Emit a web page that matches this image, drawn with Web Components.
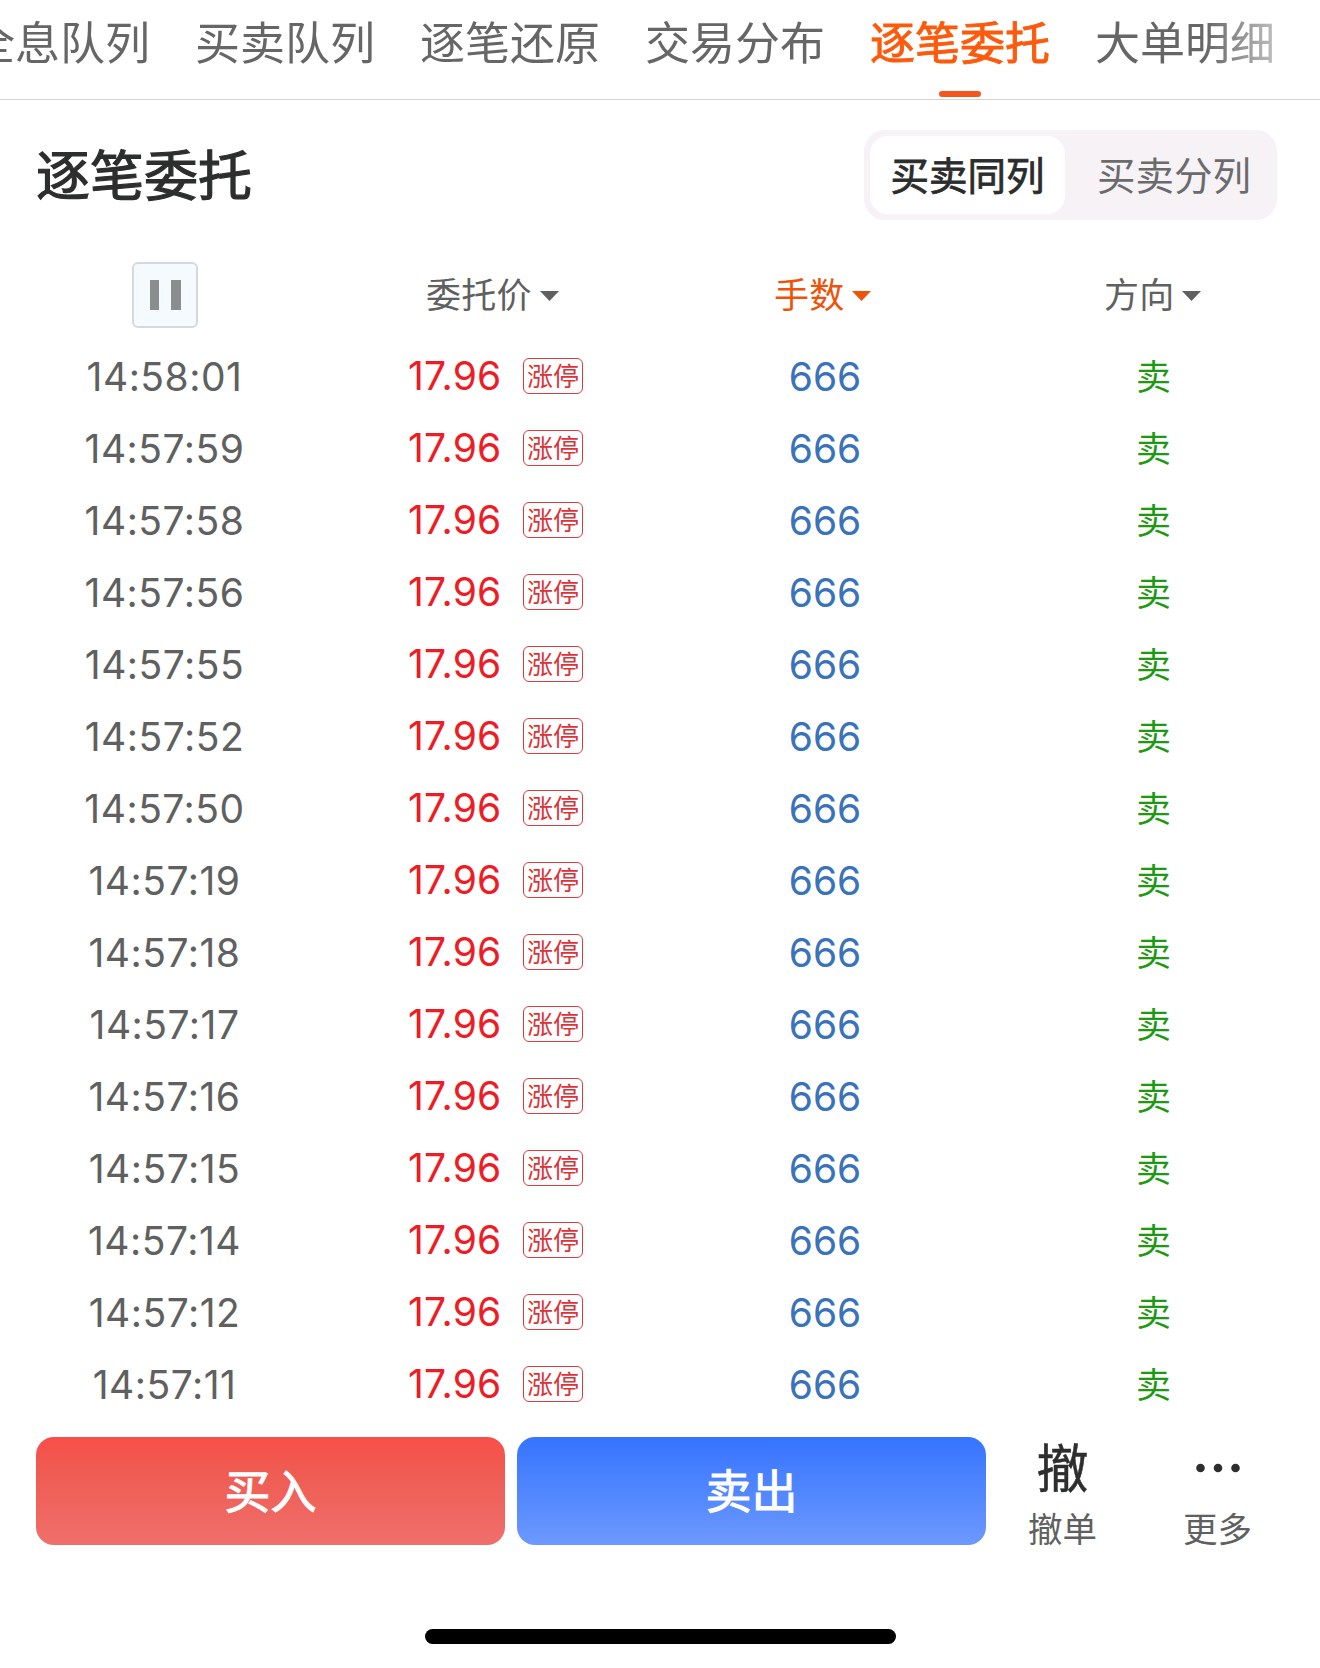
<!DOCTYPE html>
<html lang="zh-CN">
<head>
<meta charset="utf-8">
<title>逐笔委托</title>
<style>
  body {
    margin: 0;
    background: #fff;
    color: #5f6060;
    font-family: Inter, "Noto Sans CJK SC", sans-serif;
  }
</style>
</head>
<body>
<order-page></order-page>

<script>
const define = (name, html, setup) => {
  const template = document.createElement('template')
  template.innerHTML = html
  customElements.define(name, class extends HTMLElement {
    constructor() {
      super()
      this.attachShadow({ mode: 'open' })
      this.shadowRoot.appendChild(template.content.cloneNode(true))
    }
    connectedCallback() {
      if (setup) setup(this.shadowRoot, this)
    }
  })
}

define('tab-item', /* html */ `
<style>
  :host {
    display: flex;
    flex-direction: column;
    align-items: center;
    flex: none;
    height: 97px;
    box-sizing: border-box;
    font-size: 45px;
    line-height: 88px;
    white-space: nowrap;
    color: #666;
  }
  i {
    display: none;
    width: 42px;
    height: 6px;
    margin-top: 3px;
    border-radius: 3px;
    background: #f2571d;
  }
  :host([active]) {
    color: #fc5a0c;
    -webkit-text-stroke: 0.9px currentColor;
  }
  :host([active]) i {
    display: block;
  }
</style>
<slot></slot>
<i></i>
`)

define('tab-bar', /* html */ `
<style>
  :host {
    display: block;
    height: 100px;
    box-sizing: border-box;
    border-bottom: 1px solid #d3d6d5;
    overflow: hidden;
  }
  /* the last tab fades out towards the right edge */
  div {
    display: flex;
    gap: 45px;
    -webkit-mask-image: linear-gradient(90deg, #000 1205px, rgba(0, 0, 0, 0.3) 1290px);
  }
  ::slotted(tab-item:first-child) {
    margin-left: -30px;
  }
</style>
<div><slot></slot></div>
`)

define('segment-control', /* html */ `
<style>
  :host {
    display: flex;
    width: 413px;
    height: 90px;
    padding: 6px;
    box-sizing: border-box;
    border-radius: 21px;
    background: #f6f2f6;
    font-size: 38.5px;
    line-height: 80px;
    color: #6b6b6d;
  }
  div {
    width: 195px;
    text-align: center;
  }
  .on {
    border-radius: 18px;
    background: #fff;
    color: #2b2c2c;
    -webkit-text-stroke: 0.8px currentColor;
  }
  .off {
    flex: 1;
    padding-left: 12px;
  }
  .on, .off {
    height: 78px;
  }
</style>
<div class="on"><slot name="on"></slot></div>
<div class="off"><slot name="off"></slot></div>
`)

define('pause-button', /* html */ `
<style>
  :host {
    display: flex;
    align-items: center;
    justify-content: center;
    gap: 12px;
    width: 66px;
    height: 66px;
    box-sizing: border-box;
    border: 2px solid #d6d8e0;
    border-radius: 6px;
    background: #f5faff;
  }
  i {
    width: 9.5px;
    height: 30px;
    background: #8b8e8f;
  }
</style>
<i></i><i></i>
`)

define('sort-label', /* html */ `
<style>
  :host {
    display: flex;
    align-items: center;
    gap: 8px;
    height: 66px;
    font-size: 35px;
    line-height: 66px;
    letter-spacing: 0.2px;
  }
  :host([active]) {
    color: #ee5309;
  }
  svg {
    margin-top: 2px;
  }
</style>
<slot></slot>
<svg width="19" height="10" viewBox="0 0 19 10"><path d="M0 0h19L9.5 10z" fill="currentColor"/></svg>
`)

define('limit-badge', /* html */ `
<style>
  :host {
    display: block;
    width: 60px;
    height: 36px;
    box-sizing: border-box;
    border: 1.5px solid #dc3a40;
    border-radius: 6px;
    font-size: 26px;
    line-height: 36px;
    text-align: center;
    color: #dc3338;
  }
</style>
<slot></slot>
`)

define('order-row', /* html */ `
<style>
  :host {
    display: grid;
    grid-template-columns: 329px 334px 324px 333px;
    align-items: center;
    height: 72px;
    font-size: 39px;
    line-height: 74px;
  }
  .time, .lots {
    height: 72px;
    text-align: center;
  }
  .time {
    letter-spacing: 0.5px;
  }
  .price {
    display: flex;
    align-items: center;
    gap: 22px;
    height: 72px;
    padding-left: 79px;
    color: #ee1c25;
  }
  .price span {
    width: 93px;
    letter-spacing: 0.2px;
  }
  .lots {
    color: #3a73b9;
  }
  .side {
    height: 72px;
    text-align: center;
    font-size: 35px;
    color: #1e9a12;
  }
</style>
<div class="time"></div>
<div class="price"><span></span><limit-badge>涨停</limit-badge></div>
<div class="lots"></div>
<div class="side"></div>
`, (root, el) => {
  root.querySelector('.time').textContent = el.getAttribute('time')
  root.querySelector('.price span').textContent = el.getAttribute('price')
  root.querySelector('.lots').textContent = el.getAttribute('lots')
  root.querySelector('.side').textContent = el.getAttribute('side')
})

define('order-table', /* html */ `
<style>
  :host {
    display: block;
  }
  header {
    display: grid;
    grid-template-columns: 329px 334px 324px 333px;
    height: 78px;
  }
  header > * {
    justify-self: start;
  }
</style>
<header>
  <pause-button style="margin-left: 132px"></pause-button>
  <sort-label style="margin-left: 97px">委托价</sort-label>
  <sort-label active style="margin-left: 111px">手数</sort-label>
  <sort-label style="margin-left: 117px">方向</sort-label>
</header>
<div class="rows"></div>
`, (root) => {
  const times = [
    '14:58:01', '14:57:59', '14:57:58', '14:57:56', '14:57:55',
    '14:57:52', '14:57:50', '14:57:19', '14:57:18', '14:57:17',
    '14:57:16', '14:57:15', '14:57:14', '14:57:12', '14:57:11',
  ]
  root.querySelector('.rows').innerHTML = times.map((time) =>
    `<order-row time="${time}" price="17.96" lots="666" side="卖"></order-row>`
  ).join('')
})

define('trade-button', /* html */ `
<style>
  :host {
    display: block;
    width: 469px;
    height: 108px;
    border-radius: 18px;
    background: linear-gradient(#f94e49, #ef5b52 30%, #f06f6b);
    font-size: 46px;
    line-height: 109px;
    text-align: center;
    color: #fff;
    -webkit-text-stroke: 1px currentColor;
  }
  :host([sell]) {
    background: linear-gradient(#3574ff, #6d98ff);
  }
</style>
<slot></slot>
`)

define('tool-button', /* html */ `
<style>
  :host {
    display: flex;
    flex-direction: column;
    align-items: center;
    width: 155px;
    font-size: 34.5px;
    line-height: 50px;
  }
  .icon {
    display: flex;
    align-items: center;
    height: 62px;
    margin-bottom: 6px;
    font-size: 52px;
    line-height: 66px;
    color: #2d2e2e;
    -webkit-text-stroke: 0.5px currentColor;
  }
</style>
<div class="icon"><slot name="icon"></slot></div>
<slot></slot>
`)

define('bottom-bar', /* html */ `
<style>
  :host {
    display: flex;
    padding: 17px 0 0 36px;
  }
  trade-button + trade-button {
    margin: 0 -1px 0 12px;
  }
  tool-button span {
    padding-top: 4px;
  }
</style>
<trade-button>买入</trade-button>
<trade-button sell>卖出</trade-button>
<tool-button><span slot="icon">撤</span>撤单</tool-button>
<tool-button>
  <svg slot="icon" width="46" height="10" viewBox="0 0 46 10" fill="currentColor">
    <circle cx="5.5" cy="5" r="4.3"/><circle cx="23" cy="5" r="4.3"/><circle cx="40.5" cy="5" r="4.3"/>
  </svg>更多
</tool-button>
`)

define('order-page', /* html */ `
<style>
  :host {
    display: flex;
    flex-direction: column;
    width: 1320px;
    height: 1668px;
    overflow: hidden;
  }
  .head {
    display: flex;
    justify-content: space-between;
    padding: 30px 43px 42px 36px;
  }
  h1 {
    height: 90px;
    margin: 0;
    font-size: 54px;
    font-weight: 400;
    line-height: 94px;
    color: #2d2e2e;
    -webkit-text-stroke: 1.2px currentColor;
  }
  .home {
    width: 471px;
    height: 15px;
    margin: auto auto 24px;
    border-radius: 8px;
    background: #000;
  }
</style>
<tab-bar>
  <tab-item>全息队列</tab-item>
  <tab-item>买卖队列</tab-item>
  <tab-item>逐笔还原</tab-item>
  <tab-item>交易分布</tab-item>
  <tab-item active>逐笔委托</tab-item>
  <tab-item>大单明细</tab-item>
</tab-bar>
<div class="head">
  <h1>逐笔委托</h1>
  <segment-control><span slot="on">买卖同列</span><span slot="off">买卖分列</span></segment-control>
</div>
<order-table></order-table>
<bottom-bar></bottom-bar>
<div class="home"></div>
`)
</script>
</body>
</html>
